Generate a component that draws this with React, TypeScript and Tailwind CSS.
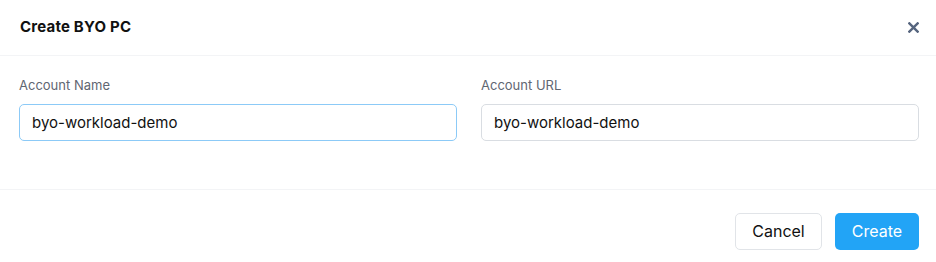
import { useState } from 'react';

export default function App() {
  const [name, setName] = useState('byo-workload-demo');
  const [url, setUrl] = useState('byo-workload-demo');

  return (
    <div
      className="w-[936px] h-[262px] bg-white flex flex-col text-[#1f2329]"
      style={{ fontFamily: 'Inter, "Liberation Sans", sans-serif' }}
    >
      <div className="h-[56px] flex items-center justify-between pl-5 pr-[16px] border-b border-[#f3f4f6]">
        <h1 className="text-[15px] font-bold tracking-[0.2px] text-[#111]">Create BYO PC</h1>
        <button className="w-[14px] h-5 flex items-center justify-center text-[#56657e]">
          <svg className="w-[11px] h-[11px]" viewBox="0 0 12 12" fill="none" stroke="currentColor" strokeWidth={2.6} strokeLinecap="square">
            <path d="M1.5 1.5l9 9M10.5 1.5l-9 9" />
          </svg>
        </button>
      </div>

      <div className="flex gap-6 pl-[19px] pr-[17px] pt-[20px] pb-[48px] border-b border-[#f3f4f6]">
        <div className="flex-1 flex flex-col gap-[8px]">
          <label className="text-[13px] text-[#5f6672]">Account Name</label>
          <input
            value={name}
            onChange={(e) => setName(e.target.value)}
            className="h-[37px] px-3 rounded-[5px] border border-[#8ccaf7] outline-none text-[15px] text-[#111]"
          />
        </div>
        <div className="flex-1 flex flex-col gap-[8px]">
          <label className="text-[13px] text-[#5f6672]">Account URL</label>
          <input
            value={url}
            onChange={(e) => setUrl(e.target.value)}
            className="h-[37px] px-3 rounded-[5px] border border-[#d9dde2] outline-none text-[15px] text-[#111]"
          />
        </div>
      </div>

      <div className="flex-1 flex items-start justify-end gap-[13px] pt-[23px] pr-[17px]">
        <button className="h-[37px] w-[87px] rounded-[5px] border border-[#e1e4e8] bg-white text-[16px] text-[#111]">
          Cancel
        </button>
        <button className="h-[37px] w-[84px] rounded-[5px] bg-[#22a4f6] text-[16px] text-white">
          Create
        </button>
      </div>
    </div>
  );
}
